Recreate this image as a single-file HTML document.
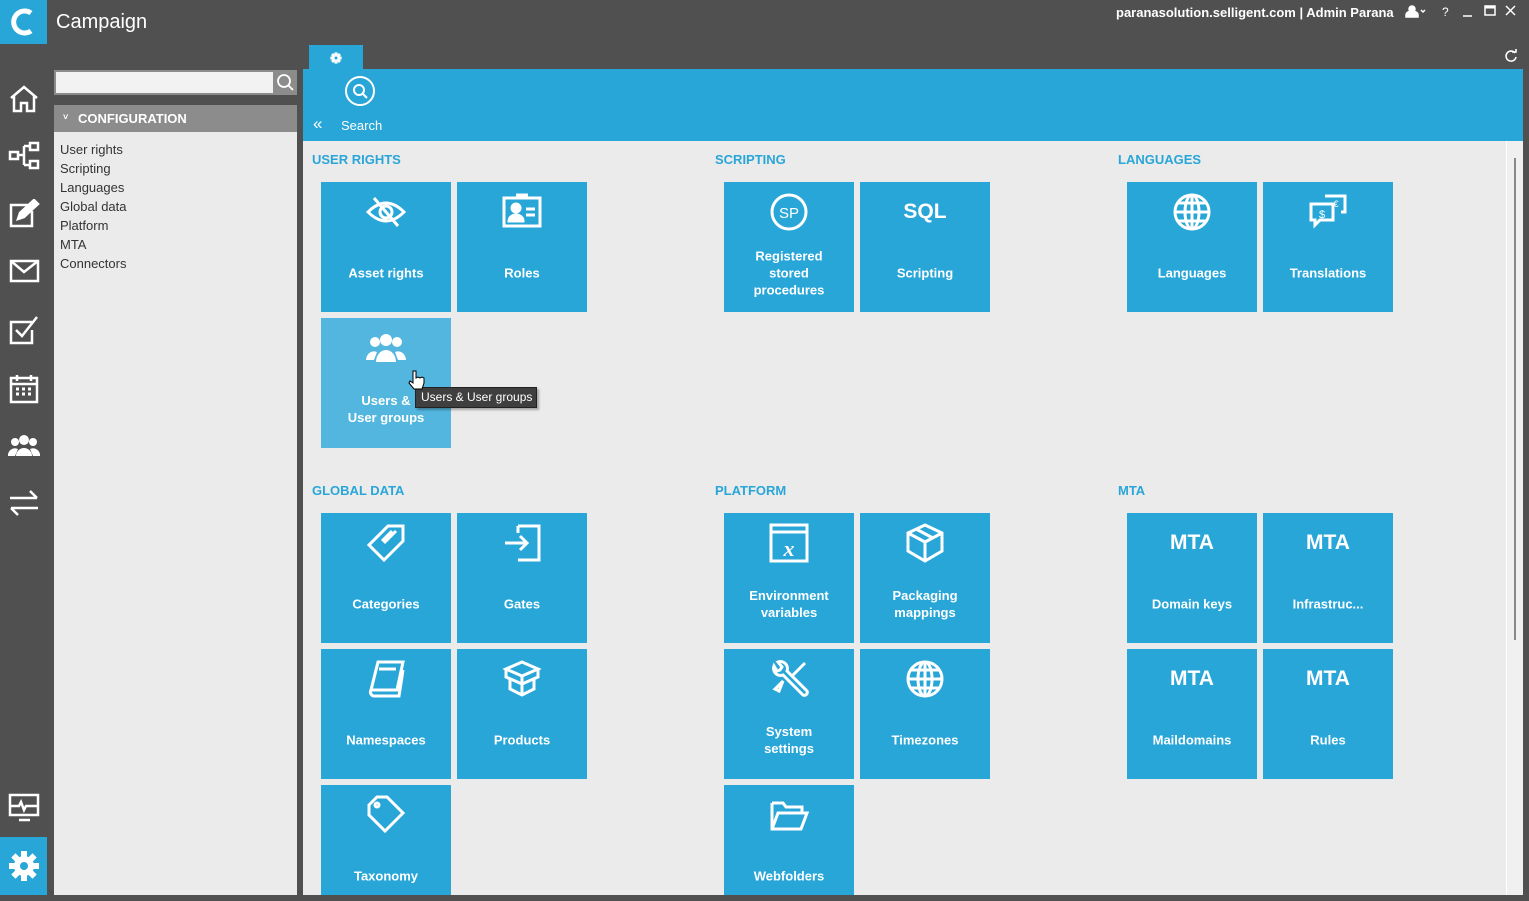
<!DOCTYPE html>
<html><head><meta charset="utf-8"><style>
*{margin:0;padding:0;box-sizing:border-box}
body{width:1529px;height:901px;background:#505050;font-family:"Liberation Sans",sans-serif;position:relative;overflow:hidden}
.a{position:absolute}
.logo{left:0;top:0;width:47px;height:44px;background:#29a6d8}
.rail svg{position:absolute;left:8px}
.tile{position:absolute;width:130px;height:130px;background:#29a6d8;color:#fff}
.tile svg{position:absolute;left:45px;top:10px;width:40px;height:40px}
.tile .l{position:absolute;left:0;right:0;top:91px;transform:translateY(-50%);text-align:center;font-weight:bold;font-size:13px;line-height:17px}
.tile .t{position:absolute;left:0;right:0;top:18px;text-align:center;font-weight:bold;font-size:21px}
.h{position:absolute;color:#29a6d8;font-weight:bold;font-size:13px}
.nav div{font-size:13px;color:#333;height:19px;line-height:19px}
</style></head><body>
<div class="a logo"><svg width="47" height="44"><path d="M31 13 A11 11 0 1 0 31 31" fill="none" stroke="#fff" stroke-width="5"/></svg></div>
<div class="a" style="left:56px;top:11px;color:#fff;font-size:20px">Campaign</div>
<div class="a" style="left:1116px;top:5px;color:#fff;font-weight:bold;font-size:13px">paranasolution.selligent.com | Admin Parana</div>
<svg class="a" style="left:1404px;top:4px" width="120" height="16" fill="none" stroke="#fff" stroke-width="1.5"><circle cx="8" cy="5" r="3" fill="#fff"/><path d="M2 13h12v-2a6 4 0 0 0-12 0z" fill="#fff"/><path d="M17 6l2 2 2-2"/><text x="38" y="12" fill="#fff" stroke="none" font-size="12" font-family="Liberation Sans">?</text><path d="M59 12h9"/><rect x="81" y="2" width="10" height="9"/><path d="M81 3h10" stroke-width="3"/><path d="M102 2l9 9M111 2l-9 9"/></svg>
<svg class="a" style="left:1503px;top:49px" width="16" height="16" fill="none" stroke="#fff" stroke-width="1.6"><path d="M12 4A5 5 0 1 0 13 8"/><path d="M9 3h4v-3" /></svg>
<div class="rail">
<svg class="a" style="top:84px" width="32" height="30" fill="none" stroke="#fff" stroke-width="2.5"><path d="M3 14L16 3l13 11M6 12v15h7v-8h6v8h7V12"/></svg>
<svg class="a" style="top:141px" width="32" height="30" fill="none" stroke="#fff" stroke-width="2.5"><rect x="2" y="11" width="8" height="7"/><rect x="22" y="2" width="8" height="7"/><rect x="22" y="20" width="8" height="7"/><path d="M10 14h6M16 5v19M16 5h6M16 24h6"/></svg>
<svg class="a" style="top:199px" width="32" height="30" fill="none" stroke="#fff" stroke-width="2.5"><path d="M20 6H3v21h21V12"/><path d="M10 20l2-6L26 1l4 4-14 13z" fill="#fff"/></svg>
<svg class="a" style="top:258px" width="32" height="26" fill="none" stroke="#fff" stroke-width="2.5"><rect x="3" y="3" width="27" height="20"/><path d="M3 3l13 11 14-11"/></svg>
<svg class="a" style="top:314px" width="32" height="32" fill="none" stroke="#fff" stroke-width="2.5"><path d="M24 8H3v21h21V16"/><path d="M8 16l6 6L29 3"/></svg>
<svg class="a" style="top:373px" width="32" height="32" fill="none" stroke="#fff" stroke-width="2.5"><rect x="3" y="5" width="26" height="24"/><path d="M3 11h26M9 2v6M23 2v6" /><path d="M8 16h3M14 16h3M20 16h3M8 21h3M14 21h3M20 21h3" stroke-width="3"/></svg>
<svg class="a" style="top:432px" width="32" height="28" fill="#fff"><circle cx="16" cy="8" r="5"/><circle cx="7" cy="10" r="4"/><circle cx="25" cy="10" r="4"/><path d="M8 24a8 8 0 0 1 16 0zM0 24a7 7 0 0 1 10-7l-3 7zM32 24a7 7 0 0 0-10-7l3 7z"/></svg>
<svg class="a" style="top:488px" width="32" height="30" fill="none" stroke="#fff" stroke-width="2.5"><path d="M2 10h27M22 3l7 7M30 20H3M10 27l-7-7"/></svg>
<svg class="a" style="top:792px" width="32" height="32" fill="none" stroke="#fff" stroke-width="2.5"><rect x="2" y="3" width="28" height="20"/><path d="M2 14h9l2-4 3 8 2-4h12M11 28h11"/></svg>
</div>
<div class="a" style="left:0;top:837px;width:47px;height:58px;background:#29a6d8"><svg style="position:absolute;left:8px;top:13px" width="32" height="32" viewBox="0 0 32 32"><g fill="#fff" transform="translate(16 16)"><circle r="10"/><rect x="-3" y="-15" width="6" height="30"/><rect x="-3" y="-15" width="6" height="30" transform="rotate(45)"/><rect x="-3" y="-15" width="6" height="30" transform="rotate(90)"/><rect x="-3" y="-15" width="6" height="30" transform="rotate(135)"/></g><circle cx="16" cy="16" r="4" fill="#29a6d8"/></svg></div>
<div class="a" style="left:54px;top:70px;width:243px;height:25px;background:#8c8c8c"><div class="a" style="left:2px;top:2px;width:217px;height:21px;background:#f2f2f2"></div><svg class="a" style="left:222px;top:3px" width="18" height="18" fill="none" stroke="#fff" stroke-width="1.8"><circle cx="8" cy="8" r="6"/><path d="M12 12l5 5"/></svg></div>
<div class="a" style="left:54px;top:105px;width:243px;height:27px;background:#8c8c8c;color:#fff;font-weight:bold;font-size:13px;line-height:27px;padding-left:24px">CONFIGURATION<span class="a" style="left:9px;top:-1px;font-size:9px">˅</span></div>
<div class="a nav" style="left:54px;top:132px;width:243px;height:763px;background:#ebebeb;padding:8px 0 0 6px">
<div>User rights</div><div>Scripting</div><div>Languages</div><div>Global data</div><div>Platform</div><div>MTA</div><div>Connectors</div></div>
<div class="a" style="left:309px;top:45px;width:54px;height:25px;background:#29a6d8"><svg class="a" style="left:21px;top:7px" width="12" height="12" viewBox="0 0 32 32"><g fill="#fff" transform="translate(16 16)"><circle r="10"/><rect x="-4" y="-15" width="8" height="30"/><rect x="-4" y="-15" width="8" height="30" transform="rotate(45)"/><rect x="-4" y="-15" width="8" height="30" transform="rotate(90)"/><rect x="-4" y="-15" width="8" height="30" transform="rotate(135)"/></g><circle cx="16" cy="16" r="4" fill="#29a6d8"/></svg></div>
<div class="a" style="left:303px;top:69px;width:1220px;height:72px;background:#29a6d8"></div>
<svg class="a" style="left:344px;top:75px" width="32" height="32" fill="none" stroke="#fff" stroke-width="2"><circle cx="16" cy="16" r="14"/><circle cx="15" cy="15" r="5"/><path d="M19 19l4 4"/></svg>
<div class="a" style="left:341px;top:118px;color:#fff;font-size:13px">Search</div>
<div class="a" style="left:313px;top:114px;color:#fff;font-size:17px">«</div>
<div class="a" style="left:303px;top:141px;width:1203px;height:754px;background:#ebebeb"></div>
<div class="a" style="left:1506px;top:141px;width:17px;height:754px;background:#f0f0f0;border-left:1px solid #fff"></div>
<div class="a" style="left:1514px;top:158px;width:2px;height:482px;background:#888"></div>

<div class="h" style="left:312px;top:152px">USER RIGHTS</div>
<div class="h" style="left:715px;top:152px">SCRIPTING</div>
<div class="h" style="left:1118px;top:152px">LANGUAGES</div>
<div class="h" style="left:312px;top:483px">GLOBAL DATA</div>
<div class="h" style="left:715px;top:483px">PLATFORM</div>
<div class="h" style="left:1118px;top:483px">MTA</div>

<div class="tile" style="left:321px;top:182px"><svg viewBox="0 0 40 40" fill="none" stroke="#fff" stroke-width="3"><path d="M2 20Q20 2 38 20Q20 38 2 20z"/><circle cx="20" cy="20" r="6"/><path d="M8 6l24 28"/></svg><div class="l">Asset rights</div></div>
<div class="tile" style="left:457px;top:182px"><svg viewBox="0 0 40 40" fill="none" stroke="#fff" stroke-width="3"><rect x="2" y="6" width="36" height="28"/><path d="M14 3h12"/><circle cx="14" cy="16" r="4" fill="#fff"/><path d="M7 29a7 6 0 0 1 14 0z" fill="#fff"/><path d="M24 17h9M24 23h9"/></svg><div class="l">Roles</div></div>
<div class="tile" style="left:321px;top:318px;background:#53b6de"><svg viewBox="0 0 40 40" fill="#fff"><circle cx="20" cy="12" r="6"/><circle cx="9" cy="14" r="5"/><circle cx="31" cy="14" r="5"/><path d="M10 34a10 12 0 0 1 20 0zM0 32a8 9 0 0 1 11-8l-3 8zM40 32a8 9 0 0 0-11-8l3 8z"/></svg><div class="l">Users &amp;<br>User groups</div></div>
<div class="a" style="left:415px;top:387px;width:122px;height:21px;background:#3f3f3f;border:1px solid #222;color:#fff;font-size:12px;line-height:19px;padding-left:5px;box-shadow:2px 2px 2px rgba(0,0,0,.3)">Users &amp; User groups</div>
<svg class="a" style="left:408px;top:370px" width="18" height="22"><path d="M5 1v12l-3-2-1 2 5 6h8l2-6v-5l-2-1-2 1-2-1-2 1V1z" fill="#fff" stroke="#000"/></svg>

<div class="tile" style="left:724px;top:182px"><svg viewBox="0 0 40 40" fill="none" stroke="#fff" stroke-width="3"><circle cx="20" cy="20" r="17"/><text x="20" y="26" fill="#fff" stroke="none" font-size="15" text-anchor="middle" font-family="Liberation Sans">SP</text></svg><div class="l">Registered<br>stored<br>procedures</div></div>
<div class="tile" style="left:860px;top:182px"><div class="t">SQL</div><div class="l">Scripting</div></div>
<div class="tile" style="left:1127px;top:182px"><svg viewBox="0 0 40 40" fill="none" stroke="#fff" stroke-width="3"><circle cx="20" cy="20" r="17"/><ellipse cx="20" cy="20" rx="7" ry="17"/><path d="M3 20h34M6 11h28M6 29h28M20 3v34"/></svg><div class="l">Languages</div></div>
<div class="tile" style="left:1263px;top:182px"><svg viewBox="0 0 40 40" fill="none" stroke="#fff" stroke-width="3"><path d="M3 12h22v16H12l-5 5v-5H3z"/><path d="M17 4h20v16h-4"/><text x="14" y="26" fill="#fff" stroke="none" font-size="11" text-anchor="middle" font-family="Liberation Sans">$</text><text x="28" y="15" fill="#fff" stroke="none" font-size="9" text-anchor="middle" font-family="Liberation Sans">€</text></svg><div class="l">Translations</div></div>

<div class="tile" style="left:321px;top:513px"><svg viewBox="0 0 40 40" fill="none" stroke="#fff" stroke-width="3"><path d="M22 3h15v15L18 37 3 22z"/><path d="M30 8l-12 12M26 8l-10 10"/></svg><div class="l">Categories</div></div>
<div class="tile" style="left:457px;top:513px"><svg viewBox="0 0 40 40" fill="none" stroke="#fff" stroke-width="3"><path d="M16 3h21v34H16M16 10V3M3 20h22M18 13l7 7-7 7"/></svg><div class="l">Gates</div></div>
<div class="tile" style="left:724px;top:513px"><svg viewBox="0 0 40 40" fill="none" stroke="#fff" stroke-width="3"><rect x="2" y="2" width="36" height="36"/><path d="M2 9h36"/><text x="20" y="33" fill="#fff" stroke="none" font-size="22" font-style="italic" font-weight="bold" text-anchor="middle" font-family="Liberation Serif">x</text></svg><div class="l">Environment<br>variables</div></div>
<div class="tile" style="left:860px;top:513px"><svg viewBox="0 0 40 40" fill="none" stroke="#fff" stroke-width="3"><path d="M20 2l17 8v18l-17 10-17-10V10z M3 10l17 9 17-9M20 19v19M11 6l17 9"/></svg><div class="l">Packaging<br>mappings</div></div>
<div class="tile" style="left:1127px;top:513px"><div class="t">MTA</div><div class="l">Domain keys</div></div>
<div class="tile" style="left:1263px;top:513px"><div class="t">MTA</div><div class="l">Infrastruc...</div></div>

<div class="tile" style="left:321px;top:649px"><svg viewBox="0 0 40 40" fill="none" stroke="#fff" stroke-width="3"><path d="M12 3h25l-6 28H5z"/><path d="M5 31a4 4 0 0 0 4 6h24l4-26M13 10h17"/></svg><div class="l">Namespaces</div></div>
<div class="tile" style="left:457px;top:649px"><svg viewBox="0 0 40 40" fill="none" stroke="#fff" stroke-width="3"><path d="M4 10l16-7 16 7-16 7zM4 10v8l16 7 16-7v-8M8 20v10l12 6 12-6V20M20 17v19"/></svg><div class="l">Products</div></div>
<div class="tile" style="left:724px;top:649px"><svg viewBox="0 0 40 40" fill="none" stroke="#fff" stroke-width="3"><path d="M5 7a7 7 0 0 0 9 9l20 20a3 3 0 0 0 4-4L18 12a7 7 0 0 0-9-9l4 5-2 3-3 1z"/><path d="M36 4l-14 14M6 30l8-8-4 10z"/></svg><div class="l">System<br>settings</div></div>
<div class="tile" style="left:860px;top:649px"><svg viewBox="0 0 40 40" fill="none" stroke="#fff" stroke-width="3"><circle cx="20" cy="20" r="17"/><ellipse cx="20" cy="20" rx="7" ry="17"/><path d="M3 20h34M6 11h28M6 29h28M20 3v34"/></svg><div class="l">Timezones</div></div>
<div class="tile" style="left:1127px;top:649px"><div class="t">MTA</div><div class="l">Maildomains</div></div>
<div class="tile" style="left:1263px;top:649px"><div class="t">MTA</div><div class="l">Rules</div></div>

<div class="tile" style="left:321px;top:785px;height:110px"><svg viewBox="0 0 40 40" fill="none" stroke="#fff" stroke-width="3"><path d="M3 10l8-8h10l16 16-18 18L3 20z"/><circle cx="11" cy="10" r="2"/></svg><div class="l">Taxonomy</div></div>
<div class="tile" style="left:724px;top:785px;height:110px"><svg viewBox="0 0 40 40" fill="none" stroke="#fff" stroke-width="3"><path d="M3 8h11l3 4h16v6M3 8v26h29l6-16H9l-6 16"/></svg><div class="l">Webfolders</div></div>
</body></html>
